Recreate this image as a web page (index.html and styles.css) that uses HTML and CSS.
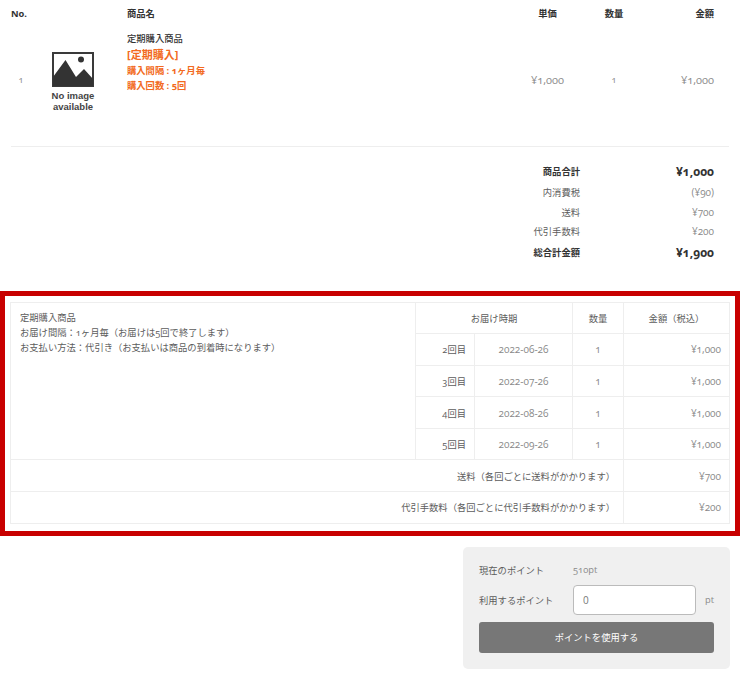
FILE: index.html
```html
<!DOCTYPE html>
<html lang="ja">
<head>
    <meta charset="UTF-8">
    <meta name="viewport" content="width=device-width, initial-scale=1.0">
    <title>ご注文内容の確認</title>
    <link rel="stylesheet" href="styles.css">
</head>
<body>
    <section class="cart">
        <table class="cart-table">
            <colgroup>
                <col class="col-no">
                <col class="col-img">
                <col class="col-name">
                <col class="col-price">
                <col class="col-qty">
                <col class="col-sum">
            </colgroup>
            <thead>
                <tr>
                    <th class="left">No.</th>
                    <th></th>
                    <th class="left">商品名</th>
                    <th>単価</th>
                    <th>数量</th>
                    <th class="right">金額</th>
                </tr>
            </thead>
            <tbody>
                <tr>
                    <td class="num">1</td>
                    <td>
                        <div class="noimage">
                            <svg width="42" height="35" viewBox="0 0 42 35">
                                <rect x="1" y="1" width="40" height="33" fill="#fff" stroke="#3a3a3a" stroke-width="2"/>
                                <path d="M1 25 L13.500 8 L24 25 L32 17 L41 27 V34 H1 Z" fill="#333"/>
                                <circle cx="29" cy="7.500" r="3" fill="#333"/>
                            </svg>
                            <p>No image<br>available</p>
                        </div>
                    </td>
                    <td class="name">
                        <p class="item-name">定期購入商品</p>
                        <p class="item-tag">[定期購入]</p>
                        <p class="item-note">購入間隔 : 1ヶ月毎</p>
                        <p class="item-note">購入回数 : 5回</p>
                    </td>
                    <td class="price">¥1,000</td>
                    <td class="num">1</td>
                    <td class="price right">¥1,000</td>
                </tr>
            </tbody>
        </table>
    </section>

    <div class="totals">
        <div class="total-row strong"><span>商品合計</span><span class="amount">¥1,000</span></div>
        <div class="total-row"><span>内消費税</span><span class="amount">(¥90)</span></div>
        <div class="total-row"><span>送料</span><span class="amount">¥700</span></div>
        <div class="total-row"><span>代引手数料</span><span class="amount">¥200</span></div>
        <div class="total-row strong"><span>総合計金額</span><span class="amount">¥1,900</span></div>
    </div>

    <section class="regular">
        <table class="regular-table">
            <colgroup>
                <col class="col-info">
                <col class="col-turn">
                <col class="col-date">
                <col class="col-count">
                <col class="col-total">
            </colgroup>
            <tr>
                <td class="info" rowspan="5">
                    定期購入商品<br>
                    お届け間隔：1ヶ月毎（お届けは5回で終了します）<br>
                    お支払い方法：代引き（お支払いは商品の到着時になります）
                </td>
                <td class="head" colspan="2">お届け時期</td>
                <td class="head">数量</td>
                <td class="head">金額（税込）</td>
            </tr>
            <tr>
                <td class="turn">2回目</td>
                <td class="val">2022-06-26</td>
                <td class="val">1</td>
                <td class="val right">¥1,000</td>
            </tr>
            <tr>
                <td class="turn">3回目</td>
                <td class="val">2022-07-26</td>
                <td class="val">1</td>
                <td class="val right">¥1,000</td>
            </tr>
            <tr>
                <td class="turn">4回目</td>
                <td class="val">2022-08-26</td>
                <td class="val">1</td>
                <td class="val right">¥1,000</td>
            </tr>
            <tr>
                <td class="turn">5回目</td>
                <td class="val">2022-09-26</td>
                <td class="val">1</td>
                <td class="val right">¥1,000</td>
            </tr>
            <tr>
                <td class="fee" colspan="4">送料（各回ごとに送料がかかります）</td>
                <td class="val right">¥700</td>
            </tr>
            <tr>
                <td class="fee" colspan="4">代引手数料（各回ごとに代引手数料がかかります）</td>
                <td class="val right">¥200</td>
            </tr>
        </table>
    </section>

    <form class="points">
        <div class="point-row">
            <span class="point-label">現在のポイント</span>
            <span class="point-now">510pt</span>
        </div>
        <div class="point-row">
            <label class="point-label" for="use_point">利用するポイント</label>
            <input type="text" id="use_point" value="0">
            <span class="point-unit">pt</span>
        </div>
        <button type="button" class="point-btn">ポイントを使用する</button>
    </form>
</body>
</html>
```

FILE: styles.css
```css
:root {
    --text: #5c5c5c;
    --text-dark: #333;
    --text-light: #8a8a8a;
    --line: #eeeeee;
    --orange: #f26a21;
    --red: #c80000;
}
* {
    box-sizing: border-box;
}
body {
    margin: 0;
    background: #fff;
    color: var(--text);
    font-family: 'Open Sans', 'Noto Sans CJK JP', sans-serif;
    font-size: 9.3px;
    font-variant-numeric: oldstyle-nums;
}
p {
    margin: 0;
}
table {
    width: 100%;
    table-layout: fixed;
}
.left {
    text-align: left;
}
.right {
    text-align: right;
}

/* cart */
.cart {
    margin: 0 11px;
    padding-bottom: 14px;
    border-bottom: 1px solid var(--line);
}
.cart-table {
    border-collapse: collapse;
}
.col-no { width: 20px; }
.col-img { width: 84px; }
.col-price { width: 53px; }
.col-qty { width: 80px; }
.col-sum { width: 75px; }
.cart-table th {
    height: 26px;
    padding: 0;
    color: var(--text-dark);
    font-size: 9.3px;
    font-weight: 700;
    white-space: nowrap;
}
.cart-table th.left:nth-child(3), .cart-table .name {
    padding-left: 12px;
}
.cart-table th.right, .cart-table td.right {
    padding-right: 15px;
}
.cart-table td {
    height: 106px;
    padding: 0;
    text-align: center;
}
.cart-table td.right {
    text-align: right;
}
.cart-table td.name {
    padding-top: 5px;
    text-align: left;
    vertical-align: top;
}
.num {
    color: var(--text-light);
    font-size: 9px;
}
.price {
    color: var(--text-light);
    font-size: 11px;
}
.noimage {
    display: flex;
    flex-direction: column;
    align-items: center;
    gap: 4px;
    padding-top: 6px;
}
.noimage svg {
    display: block;
}
.noimage p {
    color: #444;
    font-family: 'Liberation Sans', sans-serif;
    font-size: 9.5px;
    font-weight: 700;
    line-height: 10.5px;
}
.item-name {
    color: var(--text-dark);
    font-size: 9.3px;
    font-weight: 500;
    line-height: 16px;
}
.item-tag {
    color: var(--orange);
    font-size: 11px;
    font-weight: 700;
    line-height: 16px;
}
.item-note {
    color: var(--orange);
    font-size: 9.3px;
    font-weight: 700;
    line-height: 15px;
}

/* totals */
.totals {
    display: flex;
    flex-direction: column;
    margin: 14px 26px 27px 0;
}
.total-row {
    display: grid;
    grid-template-columns: 1fr 134px;
    line-height: 19.5px;
    text-align: right;
}
.total-row .amount {
    color: var(--text-light);
    font-size: 10px;
}
.total-row.strong {
    color: var(--text-dark);
    font-weight: 700;
    line-height: 22px;
}
.total-row.strong .amount {
    color: var(--text-dark);
    font-size: 12px;
}

/* regular purchase */
.regular {
    height: 245px;
    padding: 6px 5px 0;
    border: 5px solid var(--red);
}
.regular-table {
    border-collapse: collapse;
}
.regular-table td {
    height: 31.6px;
    padding: 0;
    border: 1px solid var(--line);
    text-align: center;
}
.col-info { width: 405px; }
.col-turn { width: 59px; }
.col-date { width: 98px; }
.col-count { width: 51px; }
.regular-table td.info {
    padding: 7px 9px;
    line-height: 15px;
    text-align: left;
    vertical-align: top;
}
.regular-table td.turn {
    padding-right: 8px;
    text-align: right;
}
.regular-table td.val {
    color: var(--text-light);
    font-size: 10px;
}
.regular-table td.right {
    padding-right: 8px;
    text-align: right;
}
.regular-table td.fee {
    padding-right: 8px;
    text-align: right;
}

/* points */
.points {
    display: flex;
    flex-direction: column;
    width: 267px;
    height: 122px;
    margin: 11px 10px 0 auto;
    padding: 8px 16px 0;
    background: #f0f0f0;
    border-radius: 5px;
}
.point-row {
    display: flex;
    align-items: center;
    height: 30px;
}
.point-row + .point-row {
    margin-bottom: 7px;
}
.point-label {
    width: 94px;
}
.point-now {
    color: var(--text-light);
}
.point-row input {
    width: 123px;
    height: 30px;
    padding: 0 9px;
    border: 1px solid #bbb;
    border-radius: 4px;
    background: #fff;
    color: #777;
    font-family: inherit;
    font-size: 10px;
}
.point-unit {
    margin-left: auto;
    color: var(--text-light);
}
.point-btn {
    height: 31px;
    border: none;
    border-radius: 3px;
    background: #777;
    color: #fff;
    font-family: inherit;
    font-size: 9.3px;
}
```
